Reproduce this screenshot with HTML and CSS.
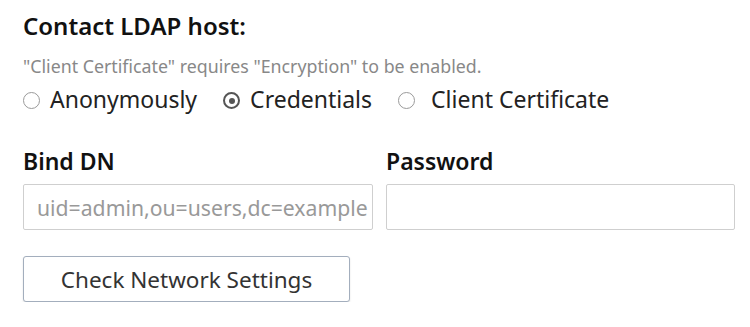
FILE: index.html
```html
<!DOCTYPE html>
<html lang="en">
<head>
    <meta charset="UTF-8">
    <meta name="viewport" content="width=device-width, initial-scale=1.0">
    <title>LDAP</title>
    <link rel="stylesheet" href="styles.css">
</head>
<body>
    <main class="ldap">
        <h2 class="title">Contact LDAP host:</h2>
        <p class="hint">"Client Certificate" requires "Encryption" to be enabled.</p>

        <div class="radios">
            <label class="radio"><span class="dot"></span>Anonymously</label>
            <label class="radio checked"><span class="dot"></span>Credentials</label>
            <label class="radio"><span class="dot"></span>Client Certificate</label>
        </div>

        <div class="fields">
            <div class="field">
                <label class="field_label">Bind DN</label>
                <input type="text" class="field_input" placeholder="uid=admin,ou=users,dc=example">
            </div>
            <div class="field">
                <label class="field_label">Password</label>
                <input type="password" class="field_input">
            </div>
        </div>

        <button class="btn_check">Check Network Settings</button>
    </main>
</body>
</html>
```

FILE: styles.css
```css
* {
    margin: 0;
    padding: 0;
    box-sizing: border-box;
}

body {
    background-color: #fff;
    color: #1a1a1a;
    font-family: 'Noto Sans', sans-serif;
}

.ldap {
    padding: 11px 15px 0 23px;
}

.title {
    font-size: 24px;
    line-height: 30px;
    font-weight: 600;
    color: #111;
}

.hint {
    margin-top: 13px;
    font-size: 17.8px;
    line-height: 24px;
    color: #888;
}

.radios {
    display: flex;
    margin-top: 6px;
    font-size: 23px;
    line-height: 30px;
    color: #222;
}

.radio {
    display: flex;
    align-items: center;
    margin-right: 26px;
}

.radio:last-child {
    margin-right: 0;
}

.radio:last-child .dot {
    margin-right: 16px;
}

.dot {
    width: 17px;
    height: 17px;
    margin-top: 3px;
    margin-right: 10px;
    border: 1px solid #9a9a9a;
    border-radius: 50%;
    position: relative;
}

.checked .dot {
    border: 2px solid #555;
}

.checked .dot::after {
    content: "";
    position: absolute;
    left: 3.5px;
    top: 3.5px;
    width: 6px;
    height: 6px;
    border-radius: 50%;
    background-color: #555;
}

.fields {
    display: grid;
    grid-template-columns: 350px 349px;
    column-gap: 13px;
    margin-top: 32px;
}

.field_label {
    display: block;
    font-size: 23px;
    line-height: 30px;
    font-weight: 600;
    color: #111;
}

.field_input {
    display: block;
    width: 100%;
    height: 46px;
    margin-top: 8px;
    padding: 0 3px 0 13px;
    border: 1px solid #cfcfcf;
    border-radius: 2px;
    font-family: 'Noto Sans', sans-serif;
    font-size: 21.2px;
    color: #333;
    outline: none;
}

.field_input::placeholder {
    color: #999;
}

.btn_check {
    display: block;
    width: 327px;
    height: 46px;
    margin-top: 26px;
    background-color: #fff;
    border: 1px solid #a3aebd;
    border-radius: 3px;
    box-shadow: 0 1px 2px rgba(0, 0, 0, 0.12);
    font-family: 'Noto Sans', sans-serif;
    font-size: 22.5px;
    color: #333;
}
```
